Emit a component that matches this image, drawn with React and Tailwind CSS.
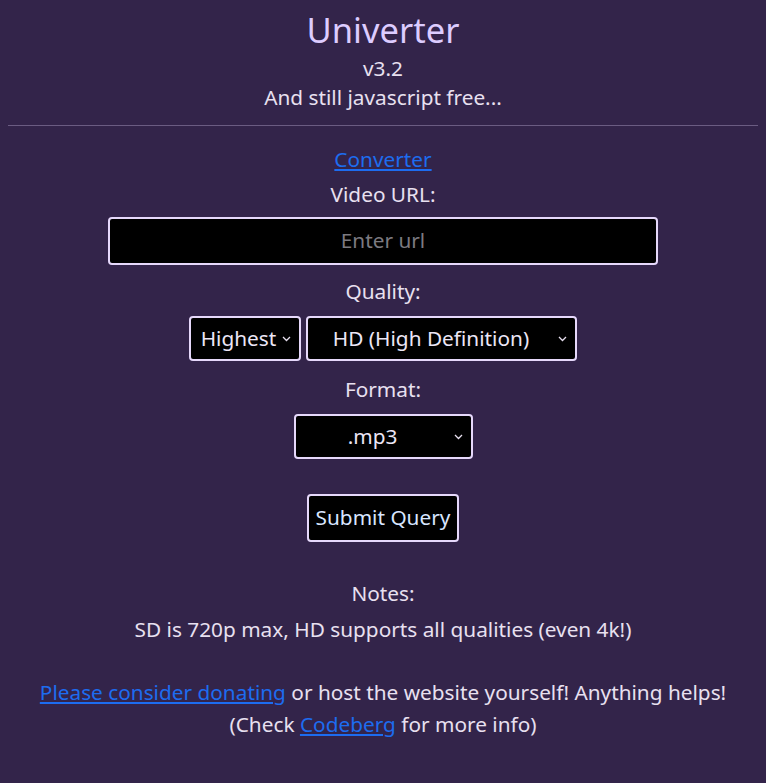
import React from 'react';

function Chevron() {
    return (
        <svg width="9" height="6" viewBox="0 0 9 6" className="shrink-0">
            <path d="M1 1 L4.5 4.5 L8 1" fill="none" stroke="#e8e0f0" strokeWidth="1.3" />
        </svg>
    );
}

function FakeSelect({ value, className, center }) {
    return (
        <div className={`h-[45px] flex items-center rounded-[4px] border-2 border-[#e6d8fb] bg-black text-[#ece6f6] ${className}`}>
            <span className={`flex-1 ${center ? 'text-center' : 'pl-[8px]'}`}>{value}</span>
            <span className="pr-[8px] pl-[4px] flex items-center"><Chevron /></span>
        </div>
    );
}

export default function App() {
    return (
        <div className="min-h-screen bg-[#33244a] px-[8px] text-[20.8px] text-[#e8e0f0] text-center" style={{ fontFamily: '"Noto Sans", "Open Sans", sans-serif' }}>
            <header className="pt-[8px]">
                <h1 className="text-[34.5px] leading-[44px] text-[#ddccff]">Univerter</h1>
                <div className="leading-[28px] mt-[2px]">v3.2</div>
                <div className="leading-[30px] mt-[0px]">And still javascript free...</div>
            </header>
            <hr className="mt-[13px] border-0 border-t border-[#6b5c82]" />

            <main className="flex flex-col items-center">
                <a href="#" className="mt-[19px] leading-[28px] text-[#1d6cf0] underline">Converter</a>
                <label className="mt-[7px] leading-[28px]">Video URL:</label>
                <div className="mt-[9px] w-[550px] h-[48px] rounded-[4px] border-2 border-[#e6d8fb] bg-black flex items-center justify-center text-[#7c7a80]">
                    Enter url
                </div>
                <label className="mt-[12px] leading-[28px]">Quality:</label>
                <div className="mt-[11px] flex gap-[5px]">
                    <FakeSelect value="Highest" className="w-[112px]" />
                    <FakeSelect value="HD (High Definition)" className="w-[271px]" center />
                </div>
                <label className="mt-[14px] leading-[28px]">Format:</label>
                <FakeSelect value=".mp3" className="mt-[11px] w-[179px]" center />
                <button className="mt-[35px] h-[48px] px-[7px] rounded-[4px] border-2 border-[#e6d8fb] bg-black text-[#d8e6ff]">
                    Submit Query
                </button>

                <div className="mt-[37px] leading-[28px]">Notes:</div>
                <div className="mt-[8px] leading-[28px]">SD is 720p max, HD supports all qualities (even 4k!)</div>

                <div className="mt-[33px] leading-[32px]">
                    <a href="#" className="text-[#1d6cf0] underline">Please consider donating</a> or host the website yourself! Anything helps!
                </div>
                <div className="leading-[32px]">
                    (Check <a href="#" className="text-[#1d6cf0] underline">Codeberg</a> for more info)
                </div>
            </main>
        </div>
    );
}
